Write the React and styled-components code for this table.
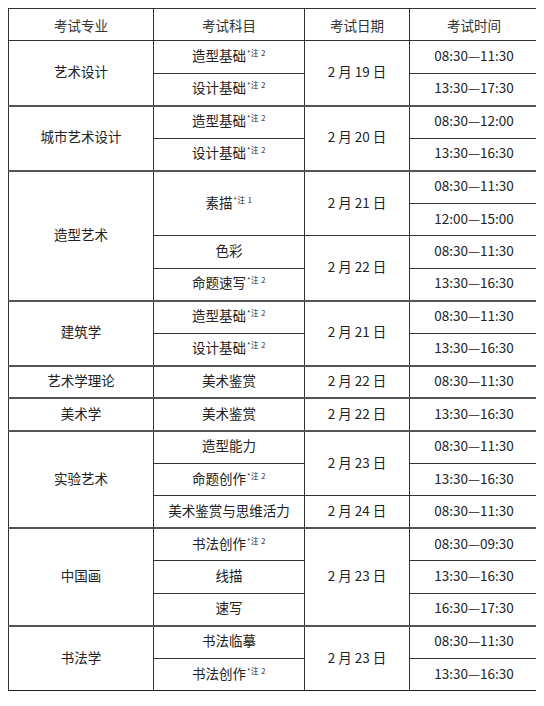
import React from 'react';
import styled, { createGlobalStyle } from 'styled-components';

const GlobalStyle = createGlobalStyle`
    body {
        margin: 8px;
        background: #fff;
        font-family: "Noto Sans CJK SC", "Noto Sans", sans-serif;
        color: #222;
    }
`;

const Table = styled.table`
    border-collapse: collapse;
    table-layout: fixed;
    width: 530px;
    font-size: 13.5px;
    border: 1.5px solid #222;
`;

const Col = styled.col`
    width: ${p => p.w}px;
`;

const Row = styled.tr`
    height: 32.5px;
    border-top: ${p => (p.group ? '2px solid #555' : '1px solid #333')};
`;

const HeadCell = styled.th`
    font-weight: normal;
    height: 31px;
    border: 1px solid #333;
    border-bottom: 1.5px solid #333;
    text-align: center;
    vertical-align: middle;
    padding: 0;
    color: #333;
`;

const Cell = styled.td`
    border-left: 1.5px solid #333;
    border-right: 1.5px solid #333;
    text-align: center;
    vertical-align: middle;
    padding: 0 0 2px;
    white-space: nowrap;
    line-height: 1;
`;

const Note = styled.sup`
    font-size: 7.5px;
    vertical-align: 5px;
    margin-left: 1px;
    letter-spacing: 0.5px;
`;

const rows = [
    { major: '艺术设计', span: 2, items: [
        { sub: '造型基础', note: '2', date: '2 月 19 日', dspan: 2, time: '08:30—11:30' },
        { sub: '设计基础', note: '2', time: '13:30—17:30' },
    ] },
    { major: '城市艺术设计', span: 2, items: [
        { sub: '造型基础', note: '2', date: '2 月 20 日', dspan: 2, time: '08:30—12:00' },
        { sub: '设计基础', note: '2', time: '13:30—16:30' },
    ] },
    { major: '造型艺术', span: 4, items: [
        { sub: '素描', note: '1', sspan: 2, date: '2 月 21 日', dspan: 2, time: '08:30—11:30' },
        { time: '12:00—15:00', skipSub: true },
        { sub: '色彩', date: '2 月 22 日', dspan: 2, time: '08:30—11:30' },
        { sub: '命题速写', note: '2', time: '13:30—16:30' },
    ] },
    { major: '建筑学', span: 2, items: [
        { sub: '造型基础', note: '2', date: '2 月 21 日', dspan: 2, time: '08:30—11:30' },
        { sub: '设计基础', note: '2', time: '13:30—16:30' },
    ] },
    { major: '艺术学理论', span: 1, items: [
        { sub: '美术鉴赏', date: '2 月 22 日', dspan: 1, time: '08:30—11:30' },
    ] },
    { major: '美术学', span: 1, items: [
        { sub: '美术鉴赏', date: '2 月 22 日', dspan: 1, time: '13:30—16:30' },
    ] },
    { major: '实验艺术', span: 3, items: [
        { sub: '造型能力', date: '2 月 23 日', dspan: 2, time: '08:30—11:30' },
        { sub: '命题创作', note: '2', time: '13:30—16:30' },
        { sub: '美术鉴赏与思维活力', date: '2 月 24 日', dspan: 1, time: '08:30—11:30' },
    ] },
    { major: '中国画', span: 3, items: [
        { sub: '书法创作', note: '2', date: '2 月 23 日', dspan: 3, time: '08:30—09:30' },
        { sub: '线描', time: '13:30—16:30' },
        { sub: '速写', time: '16:30—17:30' },
    ] },
    { major: '书法学', span: 2, items: [
        { sub: '书法临摹', date: '2 月 23 日', dspan: 2, time: '08:30—11:30' },
        { sub: '书法创作', note: '2', time: '13:30—16:30' },
    ] },
];

export default function App() {
    return (
        <>
            <GlobalStyle />
            <Table>
                <colgroup>
                    <Col w={145} />
                    <Col w={151} />
                    <Col w={105} />
                    <Col w={129} />
                </colgroup>
                <thead>
                    <tr>
                        <HeadCell>考试专业</HeadCell>
                        <HeadCell>考试科目</HeadCell>
                        <HeadCell>考试日期</HeadCell>
                        <HeadCell>考试时间</HeadCell>
                    </tr>
                </thead>
                <tbody>
                    {rows.map((g, gi) =>
                        g.items.map((it, i) => (
                            <Row key={gi + '-' + i} group={i === 0 && gi > 0}>
                                {i === 0 && <Cell rowSpan={g.span}>{g.major}</Cell>}
                                {!it.skipSub && (
                                    <Cell rowSpan={it.sspan || 1}>
                                        {it.sub}
                                        {it.note && <Note>*注 {it.note}</Note>}
                                    </Cell>
                                )}
                                {it.date && <Cell rowSpan={it.dspan}>{it.date}</Cell>}
                                <Cell>{it.time}</Cell>
                            </Row>
                        ))
                    )}
                </tbody>
            </Table>
        </>
    );
}
